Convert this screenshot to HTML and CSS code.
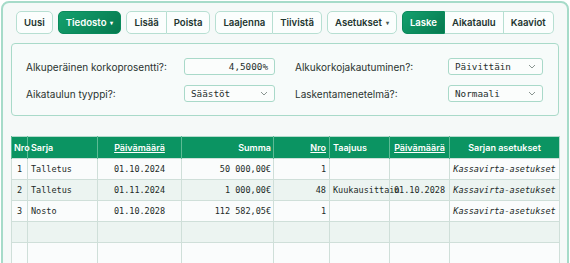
FILE: index.html
```html
<!DOCTYPE html>
<html>
<head>
<meta charset="UTF-8">
<title>Korkolaskuri</title>
<link rel="stylesheet" href="styles.css">
</head>
<body>
  <div class="app">
    <div class="toolbar">
      <button class="btn">Uusi</button>
      <button class="btn btn-green">Tiedosto <span class="caret">&#9662;</span></button>
      <div class="group">
        <button class="btn">Lisää</button>
        <button class="btn">Poista</button>
      </div>
      <div class="group">
        <button class="btn">Laajenna</button>
        <button class="btn">Tiivistä</button>
      </div>
      <button class="btn">Asetukset <span class="caret dark">&#9662;</span></button>
      <div class="group">
        <button class="btn btn-green">Laske</button>
        <button class="btn">Aikataulu</button>
        <button class="btn">Kaaviot</button>
      </div>
    </div>

    <div class="settings">
      <label class="label">Alkuperäinen korkoprosentti?:</label>
      <div class="field num">4,5000%</div>
      <label class="label label2">Alkukorkojakautuminen?:</label>
      <div class="field select">Päivittäin
        <svg width="8" height="5" viewBox="0 0 8 5"><path d="M1 1l3 3 3-3" fill="none" stroke="#8a9591" stroke-width="1"/></svg>
      </div>

      <label class="label">Aikataulun tyyppi?:</label>
      <div class="field select">Säästöt
        <svg width="8" height="5" viewBox="0 0 8 5"><path d="M1 1l3 3 3-3" fill="none" stroke="#8a9591" stroke-width="1"/></svg>
      </div>
      <label class="label label2">Laskentamenetelmä?:</label>
      <div class="field select">Normaali
        <svg width="8" height="5" viewBox="0 0 8 5"><path d="M1 1l3 3 3-3" fill="none" stroke="#8a9591" stroke-width="1"/></svg>
      </div>
    </div>

    <table class="grid">
      <colgroup>
        <col style="width:16px"><col style="width:70px"><col style="width:84px"><col style="width:92px">
        <col style="width:56px"><col style="width:60px"><col style="width:60px"><col style="width:110px">
      </colgroup>
      <thead>
        <tr>
          <th class="nro">Nro</th>
          <th>Sarja</th>
          <th class="c"><a>Päivämäärä</a></th>
          <th class="r sum">Summa</th>
          <th class="r"><a>Nro</a></th>
          <th>Taajuus</th>
          <th class="c"><a>Päivämäärä</a></th>
          <th class="c">Sarjan asetukset</th>
        </tr>
      </thead>
      <tbody>
        <tr>
          <td class="c">1</td><td>Talletus</td><td class="c">01.10.2024</td><td class="r sum">50 000,00€</td>
          <td class="r">1</td><td></td><td></td><td class="c it">Kassavirta-asetukset</td>
        </tr>
        <tr>
          <td class="c">2</td><td>Talletus</td><td class="c">01.11.2024</td><td class="r sum">1 000,00€</td>
          <td class="r">48</td><td>Kuukausittain</td><td class="c">01.10.2028</td><td class="c it">Kassavirta-asetukset</td>
        </tr>
        <tr>
          <td class="c">3</td><td>Nosto</td><td class="c">01.10.2028</td><td class="r sum">112 582,05€</td>
          <td class="r">1</td><td></td><td></td><td class="c it">Kassavirta-asetukset</td>
        </tr>
        <tr><td></td><td></td><td></td><td></td><td></td><td></td><td></td><td></td></tr>
        <tr><td></td><td></td><td></td><td></td><td></td><td></td><td></td><td></td></tr>
        <tr><td></td><td></td><td></td><td></td><td></td><td></td><td></td><td></td></tr>
      </tbody>
    </table>
  </div>
</body>
</html>
```

FILE: styles.css
```css
/* General Styles */
body {
    margin: 0;
    overflow: hidden;
    background: #ffffff;
    font-family: 'Inter', 'Liberation Sans', sans-serif;
    color: #25302d;
}

.app {
    margin: 1px 1px 0 1px;
    padding: 8px 8px 0 8px;
    height: 300px;
    border: 2px solid #a6dbc9;
    border-radius: 8px;
    background: #f5f9f8;
}

/* Toolbar */
.toolbar {
    display: flex;
    gap: 5px;
    margin-left: 5px;
    height: 23px;
}

.group {
    display: flex;
}

.btn {
    display: inline-flex;
    align-items: center;
    height: 23px;
    padding: 0 7px;
    white-space: nowrap;
    font-family: 'Inter', sans-serif;
    font-size: 9.6px;
    font-weight: 600;
    color: #22352f;
    background: #fbfefd;
    border: 1px solid #b7dfd2;
    border-radius: 5px;
}

.group .btn {
    border-radius: 0;
}

.group .btn + .btn {
    border-left: none;
}

.group .btn:first-child {
    border-radius: 5px 0 0 5px;
}

.group .btn:last-child {
    border-radius: 0 5px 5px 0;
}

.btn-green {
    color: #ffffff;
    background: linear-gradient(135deg, #14a06d, #06794f);
    border-color: #0a8a5c;
}

.caret {
    font-size: 6px;
    margin-left: 4px;
}

.caret.dark {
    color: #4a5a55;
}

/* Settings panel */
.settings {
    display: grid;
    grid-template-columns: 158px 91px 1fr 95px;
    row-gap: 10px;
    align-items: center;
    margin-top: 9px;
    padding: 14px 15px 13px 14px;
    border: 1px solid #a9dac9;
    border-radius: 4px;
    background: #f7fbfa;
}

.label {
    font-size: 10px;
    color: #2a3330;
}

.label2 {
    padding-left: 20px;
}

.field {
    height: 17px;
    box-sizing: border-box;
    padding: 0 6px;
    border: 1px solid #a9d9c9;
    border-radius: 3px;
    background: #fbfdfc;
    font-family: 'DejaVu Sans Mono', 'Liberation Mono', monospace;
    font-size: 9.3px;
    line-height: 15px;
    color: #27302d;
}

.num {
    text-align: right;
}

.select {
    display: flex;
    justify-content: space-between;
    align-items: center;
}

/* Table */
.grid {
    margin-top: 20px;
    width: 548px;
    table-layout: fixed;
    border-collapse: collapse;
    border: 1px solid #b3dbcc;
    font-family: 'DejaVu Sans Mono', 'Liberation Mono', monospace;
    font-size: 8.5px;
    color: #222a27;
}

.grid th {
    height: 21px;
    padding: 0 3px;
    background: #0b9462;
    color: #ffffff;
    font-family: 'Inter', sans-serif;
    font-size: 9px;
    font-weight: 600;
    text-align: left;
    white-space: nowrap;
    border-left: 1px solid #5dbb95;
}

.grid th.nro {
    padding: 0 2px;
}

.grid th a {
    text-decoration: underline;
}

.grid td {
    height: 20px;
    padding: 0 3px;
    white-space: nowrap;
    border: 1px solid #cfdfd9;
}

.grid tbody tr:nth-child(odd) {
    background: #fafcfc;
}

.grid tbody tr:nth-child(even) {
    background: #ecf4f1;
}

.c {
    text-align: center !important;
}

.r {
    text-align: right !important;
}

.sum {
    padding-right: 2px !important;
}

.it {
    font-style: italic;
}
```
